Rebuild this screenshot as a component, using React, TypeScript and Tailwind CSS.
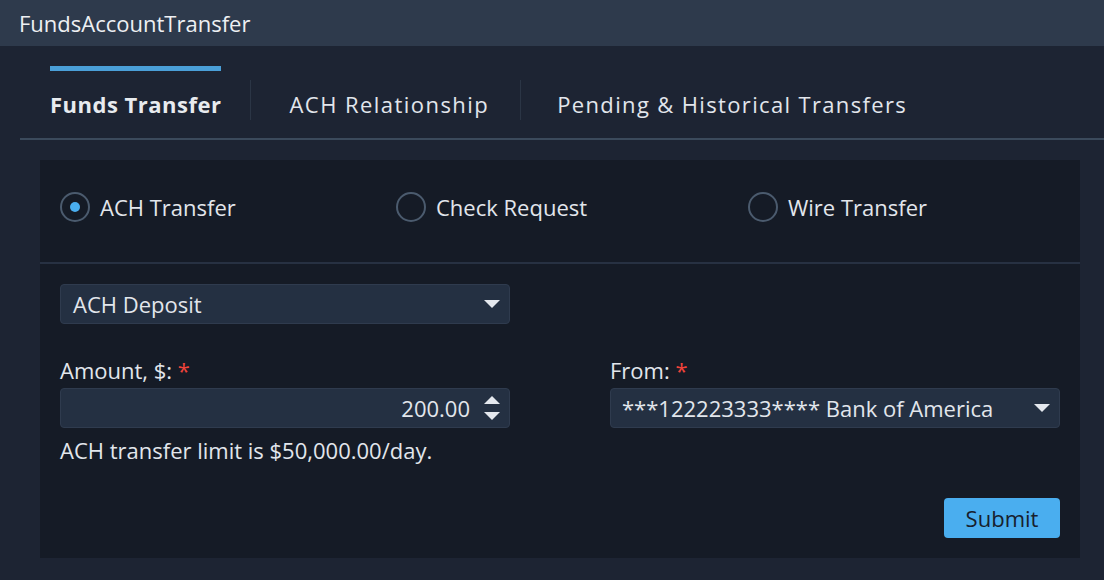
import React from "react";

function Caret() {
  return (
    <svg width="16" height="8" viewBox="0 0 16 8" className="shrink-0">
      <path d="M0 0 H16 L8 8 Z" fill="#e4e8ee" />
    </svg>
  );
}

function Spinner() {
  return (
    <svg width="16" height="24" viewBox="0 0 16 24" className="shrink-0">
      <path d="M0 8 L8 0 L16 8 Z" fill="#e4e8ee" />
      <path d="M0 16 L16 16 L8 24 Z" fill="#e4e8ee" />
    </svg>
  );
}

function Radio({ label, checked, className }: { label: string; checked?: boolean; className?: string }) {
  return (
    <label className={"flex items-center gap-[10px] " + (className ?? "")}>
      <span className="flex h-[30px] w-[30px] shrink-0 items-center justify-center rounded-full border-2 border-[#4b5b6e]">
        {checked && <span className="h-[10px] w-[10px] rounded-full bg-[#4aaeef]" />}
      </span>
      <span>{label}</span>
    </label>
  );
}

export default function App() {
  return (
    <div
      className="h-[580px] w-[1104px] overflow-hidden bg-[#1d2433] text-[22px] leading-[30px] text-[#e2e6ec]"
      style={{ fontFamily: '"Open Sans", "Noto Sans", sans-serif' }}
    >
      {/* title bar */}
      <div className="flex h-[46px] items-center bg-[#2e3a4c] px-[19px] pb-[1px] text-[#eef0f3]">
        FundsAccountTransfer
      </div>

      {/* tabs */}
      <div className="ml-[20px] flex border-b-2 border-[#3b4a5c] pl-[30px] pt-[20px]">
        <div className="border-t-[5px] border-[#4a9fd8] pt-[18px] pb-[19px] font-bold tracking-[0.5px] text-[#e8ebef]">
          Funds Transfer
        </div>
        <div className="ml-[29px] mr-[38px] mt-[14px] h-[40px] w-px bg-[#2b3545]" />
        <div className="pt-[23px] pb-[19px] tracking-[1.45px]">ACH Relationship</div>
        <div className="ml-[31px] mr-[36px] mt-[14px] h-[40px] w-px bg-[#2b3545]" />
        <div className="pt-[23px] pb-[19px] tracking-[1.35px]">Pending &amp; Historical Transfers</div>
      </div>

      {/* panel */}
      <div className="ml-[40px] mt-[20px] w-[1040px] bg-[#151b26]">
        <div className="flex h-[104px] items-center border-b-2 border-[#273142] px-[20px] pb-[8px]">
          <Radio label="ACH Transfer" checked className="w-[336px]" />
          <Radio label="Check Request" className="w-[352px]" />
          <Radio label="Wire Transfer" />
        </div>

        <div className="px-[20px] pt-[20px] pb-[20px]">
          <div className="flex h-[40px] w-[450px] items-center justify-between rounded-[4px] border border-[#2f3b4e] bg-[#243042] pl-[12px] pr-[9px]">
            <span>ACH Deposit</span>
            <Caret />
          </div>

          <div className="mt-[31px] grid grid-cols-2 gap-x-[100px]">
            <div>
              <div className="mb-[3px]">
                Amount, $: <span className="text-[#f0433a]">*</span>
              </div>
              <div className="flex h-[40px] items-center justify-end gap-[14px] rounded-[4px] border border-[#2f3b4e] bg-[#243042] pr-[9px]">
                <span>200.00</span>
                <Spinner />
              </div>
              <div className="mt-[7px]">ACH transfer limit is $50,000.00/day.</div>
            </div>
            <div>
              <div className="mb-[3px]">
                From: <span className="text-[#f0433a]">*</span>
              </div>
              <div className="flex h-[40px] items-center justify-between rounded-[4px] border border-[#2f3b4e] bg-[#243042] pl-[11px] pr-[9px]">
                <span>***122223333**** Bank of America</span>
                <Caret />
              </div>
            </div>
          </div>

          <div className="mt-[33px] flex justify-end">
            <button className="h-[40px] w-[116px] rounded-[4px] bg-[#4aaeef] text-[#17202d]">
              Submit
            </button>
          </div>
        </div>
      </div>
    </div>
  );
}
